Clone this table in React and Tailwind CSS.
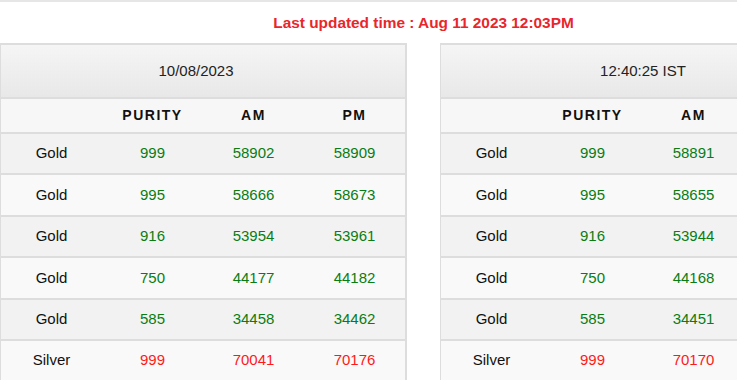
import React from "react";

const left = {
  head: "10/08/2023",
  headPad: "pr-[14px]",
  cols: ["PURITY", "AM", "PM"],
  rows: [
    ["Gold", "999", "58902", "58909"],
    ["Gold", "995", "58666", "58673"],
    ["Gold", "916", "53954", "53961"],
    ["Gold", "750", "44177", "44182"],
    ["Gold", "585", "34458", "34462"],
    ["Silver", "999", "70041", "70176"],
  ],
};
const right = {
  head: "12:40:25 IST",
  headPad: "",
  cols: ["PURITY", "AM", "PM"],
  rows: [
    ["Gold", "999", "58891", "58898"],
    ["Gold", "995", "58655", "58662"],
    ["Gold", "916", "53944", "53951"],
    ["Gold", "750", "44168", "44173"],
    ["Gold", "585", "34451", "34455"],
    ["Silver", "999", "70170", "70300"],
  ],
};

function Table({ data }) {
  return (
    <div className="w-[407px] shrink-0 border-l border-r-2 border-t-2 border-[#dddddd]">
      <div
        className={`h-[54px] flex items-center justify-center bg-gradient-to-b from-[#f5f5f5] to-[#e8e8e8] border-b-2 border-[#dddddd] text-[15px] text-[#222] ${data.headPad}`}
      >
        {data.head}
      </div>
      <div className="h-[35px] grid grid-cols-4 items-center bg-[#f7f7f7] border-b-2 border-[#dddddd] text-[14px] font-bold tracking-[1.5px] text-[#111]">
        <div></div>
        {data.cols.map((c) => (
          <div key={c} className="text-center">{c}</div>
        ))}
      </div>
      {data.rows.map((r, i) => {
        const silver = r[0] === "Silver";
        const col = silver ? "text-[#ff1a1a]" : "text-[#0a7d12]";
        return (
          <div
            key={i}
            className={`h-[41.4px] grid grid-cols-4 items-center border-b-2 border-[#dddddd] text-[15px] ${
              i % 2 === 0 ? "bg-[#f2f2f2]" : "bg-[#f9f9f9]"
            }`}
          >
            <div className="text-center text-[#111]">{r[0]}</div>
            <div className={`text-center ${col}`}>{r[1]}</div>
            <div className={`text-center ${col}`}>{r[2]}</div>
            <div className={`text-center ${col}`}>{r[3]}</div>
          </div>
        );
      })}
    </div>
  );
}

export default function App() {
  return (
    <div
      className="w-[737px] h-[380px] overflow-hidden bg-white"
      style={{ fontFamily: '"Liberation Sans", Arial, sans-serif' }}
    >
      <div className="h-[2px] bg-[#e6e6e6]"></div>
      <div className="h-[41px] flex items-center justify-center text-[15.4px] font-bold text-[#e8262b] pl-[110px]">
        Last updated time : Aug 11 2023 12:03PM
      </div>
      <div className="flex gap-[33px]">
        <Table data={left} />
        <Table data={right} />
      </div>
    </div>
  );
}
